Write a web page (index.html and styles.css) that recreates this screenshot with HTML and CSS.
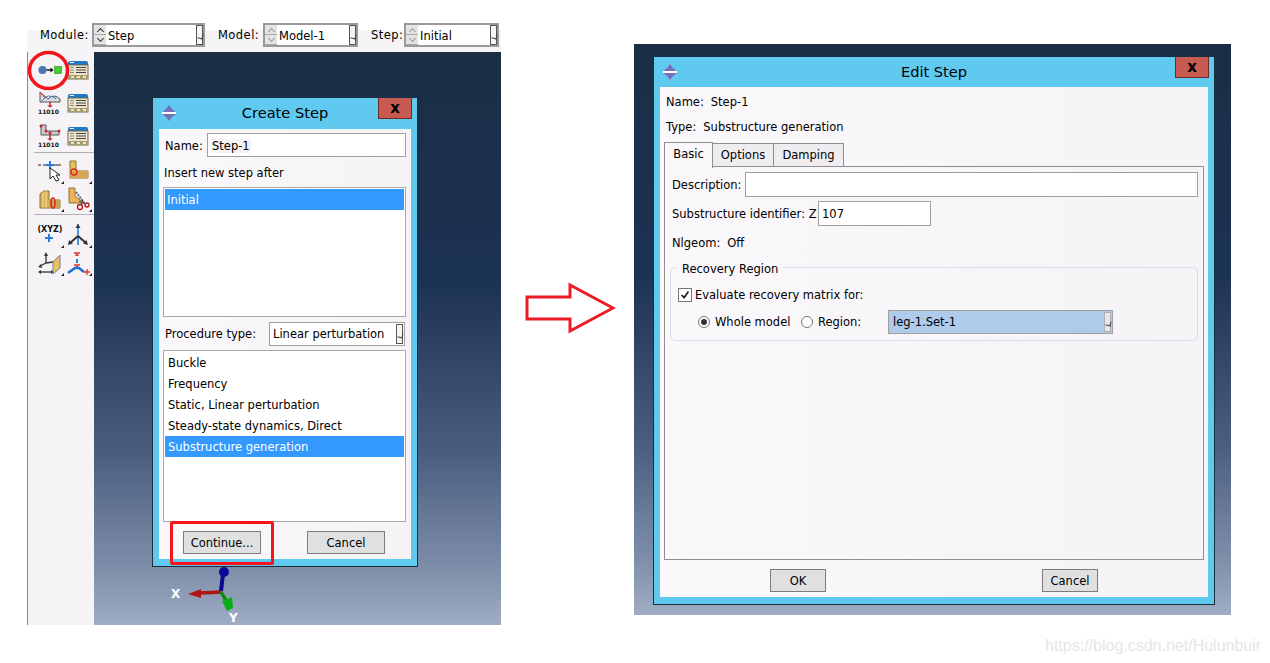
FILE: index.html
```html
<!DOCTYPE html>
<html lang="en">
<head>
<meta charset="utf-8">
<title>Create Step and Edit Step</title>
<link rel="stylesheet" href="styles.css">
</head>
<body>
<svg class="defs" width="0" height="0" aria-hidden="true">
  <defs>
    <symbol id="form" viewBox="0 0 22 20">
      <path d="M1 3q0-2 2-2h16q2 0 2 2v2H1z" fill="#1f78c8"/>
      <rect x="3" y="2" width="4" height="1" fill="#fff"/>
      <rect x="1" y="5" width="20" height="14" fill="#ece6cf" stroke="#6d6a4e"/>
      <path d="M9 7.500h10M9 10h10M9 12.500h10" stroke="#444" fill="none"/>
      <path d="M3 7.500h4M3 10h4M3 12.500h4" stroke="#8a8a80" fill="none"/>
      <rect x="1" y="15" width="20" height="4" fill="#a59d70"/>
      <path d="M4 17h3M10 17h3M16 17h3" stroke="#e9e5cf" stroke-width="2"/>
    </symbol>
    <symbol id="grip" viewBox="0 0 16 16">
      <path d="M8 0l3 4 4 3.500H1L5 4z" fill="#7670b8"/>
      <path d="M8 16l3-4 4-3H1l4 3z" fill="#7670b8"/>
      <rect x="1" y="7" width="14" height="2" fill="#fff"/>
    </symbol>
  </defs>
</svg>

<section class="app">
  <header class="modulebar">
    <span class="mlabel l-module">Module:</span>
    <div class="ctx ctx-module"><span class="spin"><i></i><i></i></span><span class="ctx-val">Step</span><span class="drop"></span></div>
    <span class="mlabel l-model">Model:</span>
    <div class="ctx ctx-model"><span class="spin dim"><i></i><i></i></span><span class="ctx-val">Model-1</span><span class="drop"></span></div>
    <span class="mlabel l-step">Step:</span>
    <div class="ctx ctx-step"><span class="spin dim"><i></i><i></i></span><span class="ctx-val">Initial</span><span class="drop"></span></div>
  </header>
  <div class="workspace">
    <aside class="toolbox">
      <div class="toolgroup g-first">
        <svg class="tool" viewBox="0 0 26 24"><circle cx="5.500" cy="12" r="4" fill="#4a74b4"/><path d="M9.500 12h6" stroke="#111" stroke-width="1.500"/><path d="M13.500 9.500l3 2.500-3 2.500z" fill="#111"/><rect x="17.500" y="8.500" width="7" height="7" fill="#3fcf2e" stroke="#2a8a20" stroke-width=".6"/></svg>
        <svg class="tool formtool"><use href="#form"/></svg>
        <svg class="tool" viewBox="0 0 26 24"><path d="M3 1v10h20V8q-6-6-12 0z" fill="#d9d9de" stroke="#555"/><path d="M5 10q6-9 14-2" stroke="#2a80d0" fill="none"/><path d="M3 1l5 6" stroke="#d33"/><path d="M13 11v5" stroke="#b22" stroke-width="1.500"/><path d="M10 14.500h6l-3 2z" fill="#b22"/><text class="nums" x="1" y="23">11010</text></svg>
        <svg class="tool formtool"><use href="#form"/></svg>
        <svg class="tool" viewBox="0 0 26 24"><path d="M4 1v10h18V7H9V1z" fill="#c9c9d2" stroke="#555"/><g fill="#c22"><circle cx="4" cy="2" r="1.500"/><circle cx="9" cy="7" r="1.500"/><circle cx="22" cy="7" r="1.500"/><circle cx="13" cy="9" r="1.500"/></g><path d="M13 11v5" stroke="#b22" stroke-width="1.500"/><path d="M10 14.500h6l-3 2z" fill="#b22"/><text class="nums" x="1" y="23">11010</text></svg>
        <svg class="tool formtool"><use href="#form"/></svg>
      </div>
      <div class="toolgroup g-second">
        <span class="tool tipped"><svg viewBox="0 0 26 24"><path d="M1 6h3M6 6h3M17 6h7" stroke="#222" stroke-width="1.200"/><path d="M13 2v8M9 6h8" stroke="#2080e0" stroke-width="2"/><path d="M13 9v11l3-3 3 5 3-1-3-5h4z" fill="#fff" stroke="#222"/></svg></span>
        <span class="tool tipped"><svg viewBox="0 0 26 24"><path d="M5 2h6v10h12v7H5z" fill="#e8c35a" stroke="#8a7530"/><path d="M5 12h18v7H5z" fill="#d8a550"/><circle cx="9" cy="13" r="3" fill="none" stroke="#d22" stroke-width="1.300"/></svg></span>
        <span class="tool tipped"><svg viewBox="0 0 26 24"><path d="M3 7l3-3h6v9h11v8H3z" fill="#d9b35a" stroke="#8a7530"/><path d="M6 4v17M9 4v17" stroke="#f0d98a"/><path d="M12 13h11v8H12z" fill="#c9a350"/><ellipse cx="16" cy="16" rx="2" ry="5" fill="none" stroke="#d22" stroke-width="1.500"/></svg></span>
        <span class="tool tipped"><svg viewBox="0 0 26 24"><path d="M4 1h6v8l9 7H4z" fill="#edb35c" stroke="#8a7530"/><path d="M11 5l9 12" stroke="#667" stroke-width="2" stroke-dasharray="2 1"/><circle cx="15" cy="20" r="2.500" fill="none" stroke="#b11" stroke-width="1.300"/><circle cx="22" cy="18" r="2" fill="none" stroke="#b11" stroke-width="1.300"/><path d="M16 18l2-5M20 17l-6-3" stroke="#444"/></svg></span>
      </div>
      <div class="toolgroup g-last">
        <span class="tool tipped"><svg viewBox="0 0 26 24"><text class="xyz" x="13" y="9" text-anchor="middle">(XYZ)</text><path d="M12 11v8M8 15h8" stroke="#2080e0" stroke-width="2"/></svg></span>
        <span class="tool tipped"><svg viewBox="0 0 26 24"><path d="M13 1v21" stroke="#1a70d8" stroke-width="1.500"/><path d="M13 13l-8 7M13 13l8 7" stroke="#333" stroke-width="2"/><path d="M10.500 5l2.500-4 2.500 4zM3 22l1-5 4 3.500zM23 22l-5-1.500 3.500-3.500z" fill="#333"/></svg></span>
        <span class="tool tipped"><svg viewBox="0 0 26 24"><path d="M9 12V4M9 12l-6 3M9 12l7-1" stroke="#333" stroke-width="1.300"/><path d="M7 5l2-4 2 4zM4 13l-3 3 4 1z" fill="#333"/><path d="M3 21h12" stroke="#333" stroke-width="1.300"/><path d="M1 21l3-2v4zM17 21l-3-2v4z" fill="#333"/><path d="M16 11l7-7v13l-7 6z" fill="#e8c35a" stroke="#7a7ab0"/></svg></span>
        <span class="tool tipped"><svg viewBox="0 0 26 24"><path d="M9 2h6M9 14h6" stroke="#e03030" stroke-width="1.500"/><path d="M12 2l-2 3h4zM12 14l-2 3h4z" fill="#e03030"/><path d="M12 8v4" stroke="#2080e0" stroke-width="2"/><path d="M3 22l7-5h4l5 4" stroke="#1a70d8" stroke-width="2.500" fill="none"/><path d="M19 21h6M22 18v6" stroke="#e03030" stroke-width="1.300"/></svg></span>
      </div>
    </aside>
    <div class="viewport">
      <svg class="triad" viewBox="0 0 100 70">
        <path d="M46 38L26 39" stroke="#b01414" stroke-width="3.500"/>
        <path d="M13 40l13-5v9z" fill="#b01414"/>
        <path d="M46 37l2-17" stroke="#0a0a90" stroke-width="4"/>
        <circle cx="49" cy="18" r="5" fill="#0a0a98"/>
        <path d="M46 38l6 10" stroke="#108c10" stroke-width="3.500"/>
        <path d="M47 47l10-4 1 11-6 3z" fill="#08b018"/>
        <text class="axis" x="-4" y="44">X</text>
        <text class="axis" x="54" y="68">Y</text>
      </svg>
    </div>
  </div>
</section>

<section class="window create">
  <div class="titlebar">
    <svg class="grip"><use href="#grip"/></svg>
    <h2 class="wtitle">Create Step</h2>
    <span class="close">x</span>
  </div>
  <div class="body create-body">
    <div class="row name-row">
      <span class="namelabel">Name:</span>
      <span class="input create-name"><span class="tinted">Step-1</span></span>
    </div>
    <p class="caption">Insert new step after</p>
    <ul class="list list-steps">
      <li class="sel">Initial</li>
    </ul>
    <div class="row proc-row">
      <span class="proclabel">Procedure type:</span>
      <span class="proc">Linear perturbation<span class="drop"></span></span>
    </div>
    <ul class="list list-proc">
      <li>Buckle</li>
      <li>Frequency</li>
      <li>Static, Linear perturbation</li>
      <li>Steady-state dynamics, Direct</li>
      <li class="sel focus">Substructure generation</li>
    </ul>
    <div class="actions create-actions">
      <button class="btn btn-wide">Continue...</button>
      <button class="btn btn-wide">Cancel</button>
    </div>
  </div>
</section>

<div class="desktop-edit"></div>
<section class="window edit">
  <div class="titlebar">
    <svg class="grip"><use href="#grip"/></svg>
    <h2 class="wtitle">Edit Step</h2>
    <span class="close">x</span>
  </div>
  <div class="body edit-body">
    <p class="meta"><span>Name:</span><span>Step-1</span></p>
    <p class="meta"><span>Type:</span><span>Substructure generation</span></p>
    <div class="tabs">
      <span class="tab on">Basic</span>
      <span class="tab t-opt">Options</span>
      <span class="tab t-dmp">Damping</span>
    </div>
    <div class="panel">
      <div class="row field-desc"><span class="desclabel">Description:</span><span class="input grow"></span></div>
      <div class="row field-id"><span class="idlabel">Substructure identifier: Z</span><span class="input id-input">107</span></div>
      <p class="meta nlgeom"><span>Nlgeom:</span><span>Off</span></p>
      <fieldset class="group">
        <legend>Recovery Region</legend>
        <div class="row check-row"><span class="check"><svg viewBox="0 0 14 14"><path d="M3 7l3 3 5-7" fill="none" stroke="#222" stroke-width="2"/></svg></span><span>Evaluate recovery matrix for:</span></div>
        <div class="row radio-row">
          <span class="radio on"></span><span class="rlabel">Whole model</span>
          <span class="radio"></span><span class="rlabel2">Region:</span>
          <span class="region">leg-1.Set-1<span class="drop soft"></span></span>
        </div>
      </fieldset>
    </div>
    <div class="actions edit-actions">
      <button class="btn btn-ok">OK</button>
      <button class="btn btn-ok">Cancel</button>
    </div>
  </div>
</section>

<svg class="flow-arrow" viewBox="0 0 92 52"><path d="M3 15h43V3l43 23-43 23V37H3z" fill="#fff" stroke="#ed1c24" stroke-width="3"/></svg>
<svg class="mark mark-circle" viewBox="0 0 44 42"><ellipse cx="21.500" cy="20.500" rx="19" ry="18" fill="none" stroke="#f5141c" stroke-width="3.500"/></svg>
<div class="mark mark-rect"></div>
<div class="watermark">https://blog.csdn.net/Hulunbuir</div>
</body>
</html>
```

FILE: styles.css
```css
* { box-sizing: border-box; }
html, body { margin: 0; padding: 0; }
body {
  position: relative;
  width: 1270px;
  height: 663px;
  overflow: hidden;
  background: #fff;
  color: #000;
  font: 11.500px/16px "DejaVu Sans", sans-serif;
}
.defs { position: absolute; }
p, ul, h2 { margin: 0; padding: 0; }
ul { list-style: none; }

/* main application window */
.app {
  position: absolute;
  left: 27px;
  top: 23px;
  width: 474px;
  height: 602px;
  display: flex;
  flex-direction: column;
}
.modulebar {
  height: 29px;
  display: flex;
  align-items: flex-start;
  padding-left: 13px;
  background: linear-gradient(#fff 0, #fff 7px, #f5f5f7 7px);
}
.mlabel { margin-top: 4px; white-space: nowrap; letter-spacing: .45px; }
.l-module { width: 52px; }
.l-model { width: 45px; margin-left: 13px; }
.l-step { width: 33px; margin-left: 13px; }
.ctx {
  height: 24px;
  display: flex;
  border: 2px solid #9a9a9a;
  background: #fff;
}
.ctx-module { width: 113px; }
.ctx-model { width: 95px; }
.ctx-step { width: 95px; }
.ctx-val { flex: 1; padding: 3px 0 0 2px; }
.spin { width: 12px; display: flex; flex-direction: column; background: #e4e4e4; }
.spin i { display: block; flex: 1; position: relative; border-bottom: 1px solid #aaa; }
.spin i::after {
  content: "";
  position: absolute;
  left: 4px;
  top: 4px;
  width: 4px;
  height: 4px;
  border-left: 1px solid #333;
  border-top: 1px solid #333;
  transform: rotate(45deg);
}
.spin i + i::after { top: 1px; transform: rotate(225deg); }
.spin.dim i::after { border-color: #999; }
.drop {
  position: relative;
  display: block;
  width: 7px;
  border: 1px solid #555;
  background: #f4f4f4;
  flex: none;
}
.drop::after {
  content: "";
  position: absolute;
  left: 1px;
  top: 42%;
  width: 4px;
  height: 4px;
  border-right: 1px solid #444;
  border-bottom: 1px solid #444;
  transform: rotate(15deg);
}
.workspace { flex: 1; display: flex; min-height: 0; }
.toolbox {
  width: 67px;
  border-left: 1px solid #8a8a8a;
  background: #f6f3f7;
  padding: 5px 0 0 9px;
}
.toolgroup {
  display: grid;
  grid-template-columns: 28px 28px;
  margin-left: -3px;
  padding-left: 3px;
  border-bottom: 1px solid #b0b0b0;
}
.g-first { grid-auto-rows: 33px; height: 96px; margin-bottom: 5px; }
.g-second { grid-auto-rows: 28px; height: 57px; margin-bottom: 7px; }
.g-last { grid-auto-rows: 28px; border-bottom: 0; }
.tool { display: block; width: 26px; height: 24px; position: relative; margin-top: 1px; }
.tool svg { display: block; width: 100%; height: 100%; }
.formtool { width: 22px; height: 20px; margin: 3px 0 0 2px; }
.tipped::after {
  content: "";
  position: absolute;
  right: -1px;
  bottom: -1px;
  border-style: solid;
  border-width: 0 0 3px 3px;
  border-color: transparent transparent #222 transparent;
}
.nums { font: bold 6px "DejaVu Sans", sans-serif; fill: #111; }
.xyz { font: bold 8px "DejaVu Sans", sans-serif; fill: #111; }
.viewport {
  flex: 1;
  position: relative;
  background: linear-gradient(#1a2e45 0, #1c3252 40%, #4a5d7e 70%, #7e8ea9 90%, #9fadc4 100%);
}
.triad {
  position: absolute;
  left: 81px;
  top: 502px;
  width: 100px;
  height: 70px;
  overflow: visible;
}
.axis { font: bold 12px "DejaVu Sans", sans-serif; fill: #fff; }

/* dialogs */
.window {
  position: absolute;
  display: flex;
  flex-direction: column;
  background: #5fc9f0;
  border: 1px solid #1e2c38;
  border-top: 0;
  padding: 0 6px 7px;
}
.create { left: 152px; top: 98px; width: 266px; height: 469px; }
.edit { left: 653px; top: 57px; width: 562px; height: 548px; }
.titlebar {
  position: relative;
  height: 31px;
  flex: none;
  display: flex;
  align-items: center;
  justify-content: center;
}
.edit .titlebar { height: 30px; }
.grip { position: absolute; left: 2px; top: 7px; width: 16px; height: 16px; }
.wtitle { font: 400 14.600px/20px "DejaVu Sans", sans-serif; }
.create .wtitle { padding-bottom: 1px; }
.close {
  position: absolute;
  right: -1px;
  top: 0;
  width: 34px;
  height: 21px;
  background: #c75b52;
  border: 1px solid #6e2a24;
  border-top: 0;
  font: 900 15px/20px "DejaVu Sans", sans-serif;
  text-align: center;
}
.body {
  flex: 1;
  min-height: 0;
  display: flex;
  flex-direction: column;
  background: linear-gradient(90deg, #fbf8fc, #f6f3f6);
}
.row { display: flex; align-items: center; }
.input {
  display: block;
  height: 24px;
  padding: 4px 3px 2px;
  background: #fff;
  border: 1px solid #a0a0a0;
}
.grow { flex: 1; }
.tinted { background: #f6f1f4; padding: 0 1px; }

/* create dialog */
.create-body { padding: 4px 4px 0 4px; }
.name-row { margin-left: 2px; height: 24px; }
.namelabel { width: 42px; padding-top: 1px; }
.create-name { width: 199px; }
.caption { margin-top: 8px; height: 16px; margin-left: 1px; }
.list { background: #fff; border: 1px solid #a8a8a8; padding: 1px; }
.list li { height: 21px; line-height: 22px; padding-left: 2px; }
.list-steps { height: 130px; margin-top: 6px; width: 243px; }
.list-proc { height: 172px; margin-top: 4px; width: 243px; }
.list-proc li { padding-left: 3px; }
.sel { background: #3399ff; color: #fff; }
.focus { outline: 1px dotted #c77d2a; outline-offset: -1px; }
.proc-row { margin: 5px 0 0 2px; height: 24px; }
.proclabel { width: 104px; white-space: nowrap; }
.proc {
  width: 136px;
  height: 24px;
  display: flex;
  justify-content: space-between;
  align-items: center;
  padding: 1px 1px 1px 3px;
  border: 1px solid #a0a0a0;
  background: #fff;
  white-space: nowrap;
}
.proc .drop { height: 20px; }
.actions { display: flex; }
.create-actions { margin-top: 9px; padding-left: 20px; gap: 46px; }
.btn {
  height: 23px;
  padding: 0;
  background: #e0e0e0;
  border: 1px solid #7c7c7c;
  color: #000;
  font: inherit;
}
.btn-wide { width: 78px; }
.btn-ok { width: 56px; }

/* edit dialog */
.edit-body { padding: 7px 4px 0 4px; }
.meta { display: flex; gap: 7px; height: 16px; margin: 0 0 9px 2px; }
.tabs { display: flex; height: 25px; margin-top: -2px; position: relative; z-index: 1; }
.tab {
  width: 61px;
  height: 24px;
  margin-top: 1px;
  padding-top: 3px;
  text-align: center;
  background: #f0edf0;
  border: 1px solid #8f8f8f;
  border-left: 0;
}
.tab.on {
  width: 49px;
  height: 26px;
  margin-top: 0;
  background: #fbf8fc;
  border-left: 1px solid #8f8f8f;
  border-bottom: 0;
  padding-top: 3px;
}
.t-dmp { width: 70px; }
.panel {
  height: 394px;
  width: 540px;
  margin-top: -1px;
  padding: 5px 5px 0 7px;
  border: 1px solid #8f8f8f;
  background: linear-gradient(90deg, #fbf8fc, #f6f3f6);
}
.desclabel { width: 73px; white-space: nowrap; }
.idlabel { width: 146px; white-space: nowrap; }
.field-desc { height: 25px; }
.field-desc .input { height: 25px; }
.field-id { height: 25px; margin-top: 4px; }
.id-input { width: 113px; height: 25px; }
.nlgeom { margin: 9px 0 0 0; }
.group {
  margin: 8px 0 0 -2px;
  padding: 12px 6px 0 7px;
  width: 528px;
  height: 82px;
  border: 1px solid #d6dde6;
  border-radius: 5px;
  position: relative;
}
.group legend { padding: 0 5px; margin-left: -1px; height: 16px; line-height: 20px; }
.check {
  width: 14px;
  height: 14px;
  border: 1px solid #777;
  background: #fff;
  margin-right: 3px;
  display: block;
}
.check svg { display: block; width: 12px; height: 12px; }
.check-row { height: 16px; }
.radio-row { height: 24px; margin: 7px 0 0 20px; }
.radio {
  width: 12px;
  height: 12px;
  border: 1px solid #777;
  border-radius: 50%;
  background: #fff;
  position: relative;
  flex: none;
}
.radio.on::after {
  content: "";
  position: absolute;
  inset: 2px;
  border-radius: 50%;
  background: #333;
}
.rlabel { margin: 0 8px 0 5px; width: 78px; white-space: nowrap; }
.rlabel2 { margin-left: 5px; width: 70px; }
.region {
  width: 225px;
  height: 24px;
  display: flex;
  justify-content: space-between;
  padding: 1px 1px 1px 4px;
  align-items: center;
  background: #aecbec;
  border: 1px solid #a0a0a0;
}
.drop.soft { height: 20px; background: #e4e8ee; border-color: #b0b0b0; }
.edit-actions { margin-top: 9px; padding-left: 106px; gap: 216px; }

/* annotations */
.flow-arrow { position: absolute; left: 524px; top: 282px; width: 92px; height: 52px; }
.mark-circle { position: absolute; left: 27px; top: 50px; width: 44px; height: 42px; }
.mark-rect {
  position: absolute;
  left: 170px;
  top: 521px;
  width: 104px;
  height: 44px;
  border: 3px solid #f5141c;
  border-radius: 2px;
}
.desktop-edit {
  position: absolute;
  left: 634px;
  top: 44px;
  width: 597px;
  height: 571px;
  background: linear-gradient(#1a2e45 0, #1c3252 40%, #4a5d7e 70%, #7e8ea9 90%, #9fadc4 100%);
}
.watermark {
  position: absolute;
  left: 1045px;
  top: 637px;
  font: 16px/18px "Liberation Sans", sans-serif;
  color: #e6e6e6;
  white-space: nowrap;
}
```
